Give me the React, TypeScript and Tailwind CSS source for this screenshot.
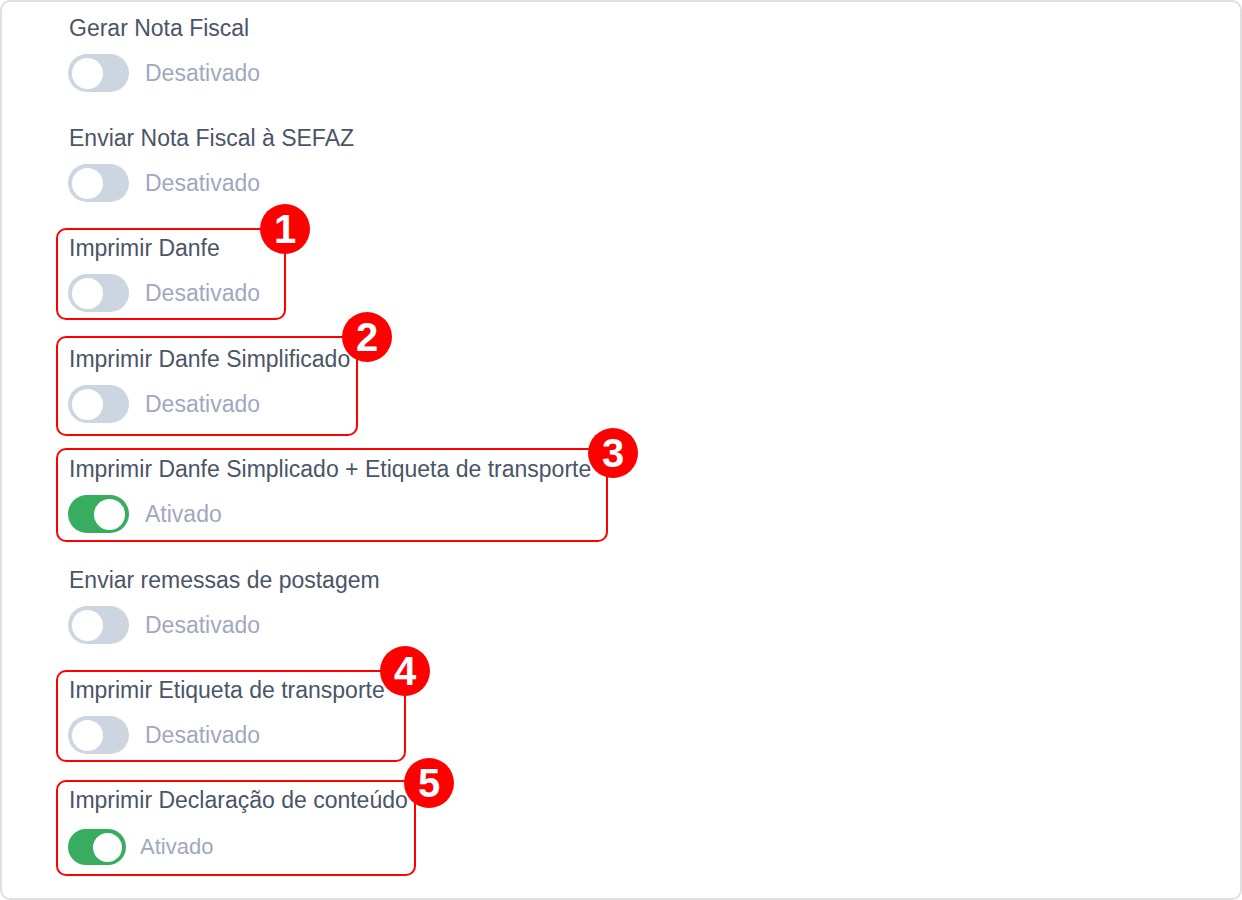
import React, { useState } from "react";
import clsx from "clsx";

type Setting = {
  id: string;
  label: string;
  active: boolean;
  compact?: boolean;
  // numbered red frame around the setting
  badge?: number;
  frame: string;
  badgePlace?: string;
};

const PLAIN = "mt-[18px] pt-0.5 pb-1.5 border-transparent";

const initialSettings: Setting[] = [
  { id: "gerar-nota", label: "Gerar Nota Fiscal", active: false, frame: PLAIN },
  {
    id: "enviar-sefaz",
    label: "Enviar Nota Fiscal à SEFAZ",
    active: false,
    frame: PLAIN,
  },
  {
    id: "danfe",
    label: "Imprimir Danfe",
    active: false,
    badge: 1,
    frame: "mt-[18px] pt-0.5 pb-1.5 w-[230px] border-[#ff0000]",
    badgePlace: "-top-[26px] -right-[26px]",
  },
  {
    id: "danfe-simplificado",
    label: "Imprimir Danfe Simplificado",
    active: false,
    badge: 2,
    frame: "mt-4 pt-[5px] pb-[11px] w-[302px] border-[#ff0000]",
    badgePlace: "-top-[26px] -right-9",
  },
  {
    id: "danfe-etiqueta",
    label: "Imprimir Danfe Simplicado + Etiqueta de transporte",
    active: true,
    badge: 3,
    frame: "mt-3 pt-[3px] pb-[7px] w-[552px] border-[#ff0000]",
    badgePlace: "-top-[22px] -right-8",
  },
  {
    id: "remessas",
    label: "Enviar remessas de postagem",
    active: false,
    frame: PLAIN,
  },
  {
    id: "etiqueta",
    label: "Imprimir Etiqueta de transporte",
    active: false,
    badge: 4,
    frame: "mt-[18px] pt-0.5 pb-1.5 w-[350px] border-[#ff0000]",
    badgePlace: "-top-[26px] -right-[26px]",
  },
  {
    id: "declaracao",
    label: "Imprimir Declaração de conteúdo",
    active: true,
    compact: true,
    badge: 5,
    frame: "mt-[18px] pt-0.5 pb-[9px] w-[360px] border-[#ff0000]",
    badgePlace: "-top-6 -right-10",
  },
];

const SettingRow = ({
  setting,
  onToggle,
}: {
  setting: Setting;
  onToggle: () => void;
}) => (
  <div
    className={clsx(
      "relative px-2.5 border-2 rounded-[10px] first:mt-0",
      setting.frame
    )}
  >
    <label
      htmlFor={setting.id}
      className="block w-fit pl-px text-[23px] leading-8 whitespace-nowrap text-[#4a5568]"
    >
      {setting.label}
    </label>

    <div
      className={clsx(
        "flex items-center",
        setting.compact ? "mt-[13px] gap-3.5" : "mt-2.5 gap-4"
      )}
    >
      <input
        id={setting.id}
        type="checkbox"
        role="switch"
        checked={setting.active}
        onChange={onToggle}
        className={clsx(
          "flex shrink-0 appearance-none items-center rounded-full bg-[#cdd5e1] px-1 cursor-pointer",
          "checked:justify-end checked:bg-[#38ad60]",
          "before:rounded-full before:bg-white before:content-['']",
          setting.compact
            ? "w-[58px] h-9 before:size-[29px]"
            : "w-[61px] h-[38px] before:size-[31px]"
        )}
      />
      <span
        className={clsx(
          "leading-8 text-[#9fa8bf]",
          setting.compact ? "text-[22px]" : "text-[23px]"
        )}
      >
        {setting.active ? "Ativado" : "Desativado"}
      </span>
    </div>

    {/* NUMBER */}
    {setting.badge && (
      <span
        className={clsx(
          "absolute flex size-[50px] items-center justify-center rounded-full bg-[#ff0000] text-[40px] leading-none font-bold text-white",
          setting.badgePlace
        )}
      >
        {setting.badge}
      </span>
    )}
  </div>
);

const App: React.FC = () => {
  const [settings, setSettings] = useState(initialSettings);

  const toggle = (id: string) => {
    setSettings((list) =>
      list.map((s) => (s.id === id ? { ...s, active: !s.active } : s))
    );
  };

  return (
    <main className="min-h-screen rounded-[10px] border-2 border-[#e0e0e0] bg-white pt-1.5 pb-5 pl-[54px] font-['Liberation_Sans',Arial,sans-serif]">
      {settings.map((s) => (
        <SettingRow key={s.id} setting={s} onToggle={() => toggle(s.id)} />
      ))}
    </main>
  );
};

export default App;
